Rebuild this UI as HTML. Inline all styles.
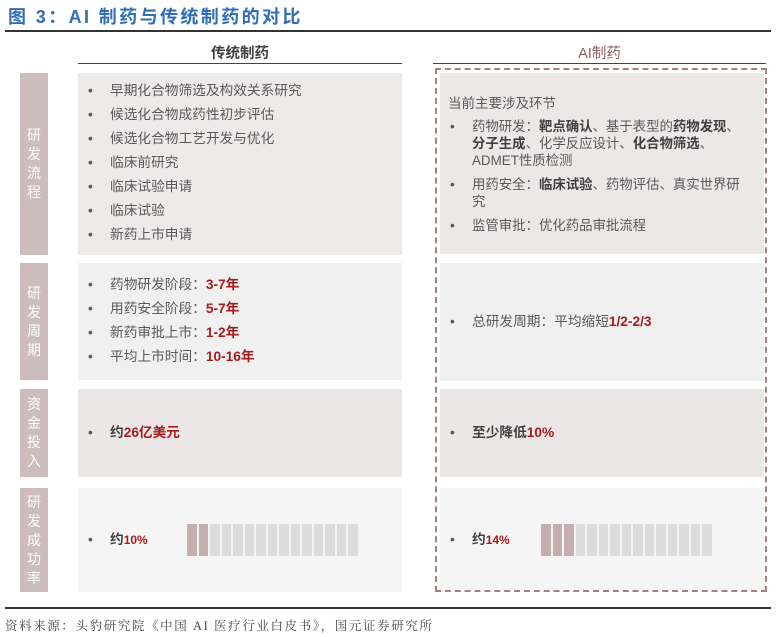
<!DOCTYPE html>
<html><head><meta charset="utf-8"><style>
*{margin:0;padding:0;box-sizing:border-box}
body{width:777px;height:637px;background:#fff;position:relative;font-family:"Liberation Sans","Noto Sans CJK SC",sans-serif;color:#595959;overflow:hidden}
.a{position:absolute}
.title{left:8px;top:3px;font-size:18px;font-weight:bold;color:#2f6eb5;letter-spacing:2.4px}
.lab{left:20px;width:28px;background:#cdbdbd;color:#fff;font-size:14px;display:flex;flex-direction:column;justify-content:center;align-items:center;line-height:19px}
.p{left:78px;width:324px}
.q{left:440px;width:324px}
ul{list-style:none;font-size:13.7px}
li{position:relative;padding-left:32px;line-height:24px}
li:before{content:"•";position:absolute;left:10px;color:#555}
.r{color:#a61c1c;font-weight:bold}
.b{font-weight:bold;color:#404040}
.bars{display:flex;gap:2px}
.bars i{display:block;width:9.5px;height:32px;background:#dcdcdc}
.bars i.on{background:#c4aeae}
</style></head><body>
<div class="a title">图 3：AI 制药与传统制药的对比</div>
<div class="a" style="left:5px;top:30px;width:766px;height:1.5px;background:#333"></div>
<div class="a" style="left:78px;top:42px;width:324px;text-align:center;font-size:14.5px;font-weight:bold;color:#404040">传统制药</div>
<div class="a" style="left:78px;top:63px;width:324px;height:1px;background:#444"></div>
<div class="a" style="left:433px;top:42px;width:333px;text-align:center;font-size:14.5px;color:#8c5f5f">AI制药</div>
<div class="a" style="left:433px;top:63px;width:333px;height:1px;background:#444"></div>

<div class="a lab" style="top:73px;height:182px">研<br>发<br>流<br>程</div>
<div class="a lab" style="top:263px;height:117px">研<br>发<br>周<br>期</div>
<div class="a lab" style="top:389px;height:88px">资<br>金<br>投<br>入</div>
<div class="a lab" style="top:488px;height:104px">研<br>发<br>成<br>功<br>率</div>

<div class="a p" style="top:73px;height:182px;background:#efeaea;padding-top:6px"><ul>
<li>早期化合物筛选及构效关系研究</li><li>候选化合物成药性初步评估</li><li>候选化合物工艺开发与优化</li><li>临床前研究</li><li>临床试验申请</li><li>临床试验</li><li>新药上市申请</li></ul></div>
<div class="a p" style="top:263px;height:117px;background:#f0f0f0;padding-top:10px"><ul>
<li>药物研发阶段：<span class="r">3-7年</span></li><li>用药安全阶段：<span class="r">5-7年</span></li><li>新药审批上市：<span class="r">1-2年</span></li><li>平均上市时间：<span class="r">10-16年</span></li></ul></div>
<div class="a p" style="top:389px;height:88px;background:#ece7e7;padding-top:32px"><ul><li><span class="b">约</span><span class="r">26亿美元</span></li></ul></div>
<div class="a p" style="top:488px;height:104px;background:#f5f5f5"></div>
<div class="a" style="left:78px;top:528px"><ul><li><span class="b">约</span><span class="r" style="font-size:12px">10%</span></li></ul></div>
<div class="a bars" style="left:187px;top:524px"><i class="on"></i><i class="on"></i><i></i><i></i><i></i><i></i><i></i><i></i><i></i><i></i><i></i><i></i><i></i><i></i><i></i></div>

<div class="a" style="left:435px;top:68px;width:332px;height:524px;border:2.5px dashed #a77f7f"></div>
<div class="a q" style="top:73px;height:181px;background:#ede8e8;padding-top:21px;padding-right:10px">
<div style="padding-left:8px;line-height:20px;font-size:13.5px">当前主要涉及环节</div>
<ul style="margin-top:4px;font-size:13.4px">
<li style="line-height:17px;margin-bottom:7px">药物研发：<span class="b">靶点确认</span>、基于表型的<span class="b">药物发现</span>、<br><span class="b">分子生成</span>、化学反应设计、<span class="b">化合物筛选</span>、<br>ADMET性质检测</li>
<li style="line-height:17px;margin-bottom:7px">用药安全：<span class="b">临床试验</span>、药物评估、真实世界研<br>究</li>
<li style="line-height:17px">监管审批：优化药品审批流程</li></ul></div>
<div class="a q" style="top:263px;height:118px;background:#f0f0f0;padding-top:47px"><ul><li>总研发周期：平均缩短<span class="r">1/2-2/3</span></li></ul></div>
<div class="a q" style="top:389px;height:88px;background:#ece7e7;padding-top:32px"><ul><li><span class="b">至少降低</span><span class="r">10%</span></li></ul></div>
<div class="a q" style="top:488px;height:102px;background:#f5f5f5"></div>
<div class="a" style="left:440px;top:528px"><ul><li><span class="b">约</span><span class="r" style="font-size:12px">14%</span></li></ul></div>
<div class="a bars" style="left:541px;top:524px"><i class="on"></i><i class="on"></i><i class="on"></i><i></i><i></i><i></i><i></i><i></i><i></i><i></i><i></i><i></i><i></i><i></i><i></i></div>

<div class="a" style="left:5px;top:607px;width:766px;height:1.5px;background:#333"></div>
<div class="a" style="left:5px;top:616px;font-size:12.5px;letter-spacing:1.6px;color:#444;font-family:'Liberation Serif','Noto Serif CJK SC',serif">资料来源：头豹研究院《中国 AI 医疗行业白皮书》，国元证券研究所</div>
</body></html>
